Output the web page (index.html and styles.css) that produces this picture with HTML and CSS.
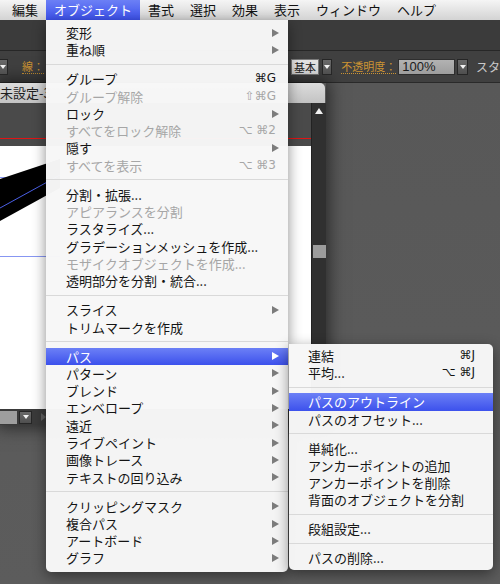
FILE: index.html
```html
<!DOCTYPE html>
<html lang="ja">
<head>
    <meta charset="UTF-8">
    <title>オブジェクト メニュー</title>
    <link rel="stylesheet" href="styles.css">
</head>
<body>
    <div class="screen">
        <div class="menubar">
            <span class="mb-item">編集</span>
            <span class="mb-item is-open">オブジェクト</span>
            <span class="mb-item">書式</span>
            <span class="mb-item">選択</span>
            <span class="mb-item">効果</span>
            <span class="mb-item">表示</span>
            <span class="mb-item">ウィンドウ</span>
            <span class="mb-item">ヘルプ</span>
        </div>

        <div class="apptool"></div>

        <div class="ctlbar">
            <div class="ctl-left">
                <span class="dd-btn dd-btn--cut"></span>
                <span class="ctl-label ctl-label--stroke">線：</span>
            </div>
            <span class="field field--light">基本</span>
            <span class="dd-btn dd-btn--after-light"></span>
            <span class="ctl-label ctl-label--opacity">不透明度：</span>
            <span class="field field--gray">100%</span>
            <span class="dd-btn dd-btn--after-gray"></span>
            <span class="ctl-text">スタ</span>
        </div>

        <div class="pasteboard">
            <div class="docwin">
                <div class="doc-tab">未設定-3</div>
                <div class="doc-body">
                    <div class="doc-view">
                        <div class="guide-red"></div>
                        <div class="artboard">
                            <svg width="311" height="263" viewBox="0 0 311 263">
                                <line x1="0" y1="31.5" x2="60" y2="31.5" stroke="#8796f2" stroke-width="1"/>
                                <line x1="0" y1="110.5" x2="60" y2="110.5" stroke="#8796f2" stroke-width="1"/>
                                <polygon points="0,33 60,13 60,42 0,75" fill="#000"/>
                                <line x1="0" y1="62" x2="60" y2="29" stroke="#4a5fe6" stroke-width="1"/>
                            </svg>
                        </div>
                    </div>
                    <div class="vscroll">
                        <span class="vs-up"></span>
                        <span class="vs-thumb"></span>
                    </div>
                </div>
                <div class="doc-status">
                    <span class="st-field"></span>
                    <span class="dd-btn dd-btn--status"></span>
                    <span class="st-next"></span>
                </div>
            </div>
        </div>

        <!-- オブジェクト menu -->
        <div class="menu menu--main">
            <div class="row">変形<span class="arrow"></span></div>
            <div class="row">重ね順<span class="arrow"></span></div>
            <div class="sep"></div>
            <div class="row">グループ<span class="key">⌘G</span></div>
            <div class="row is-off">グループ解除<span class="key">⇧⌘G</span></div>
            <div class="row">ロック<span class="arrow"></span></div>
            <div class="row is-off">すべてをロック解除<span class="key">⌥ ⌘2</span></div>
            <div class="row">隠す<span class="arrow"></span></div>
            <div class="row is-off">すべてを表示<span class="key">⌥ ⌘3</span></div>
            <div class="sep"></div>
            <div class="row">分割・拡張...</div>
            <div class="row is-off">アピアランスを分割</div>
            <div class="row">ラスタライズ...</div>
            <div class="row">グラデーションメッシュを作成...</div>
            <div class="row is-off">モザイクオブジェクトを作成...</div>
            <div class="row">透明部分を分割・統合...</div>
            <div class="sep"></div>
            <div class="row">スライス<span class="arrow"></span></div>
            <div class="row">トリムマークを作成</div>
            <div class="sep"></div>
            <div class="row is-hot">パス<span class="arrow"></span></div>
            <div class="row">パターン<span class="arrow"></span></div>
            <div class="row">ブレンド<span class="arrow"></span></div>
            <div class="row">エンベロープ<span class="arrow"></span></div>
            <div class="row">遠近<span class="arrow"></span></div>
            <div class="row">ライブペイント<span class="arrow"></span></div>
            <div class="row">画像トレース<span class="arrow"></span></div>
            <div class="row">テキストの回り込み<span class="arrow"></span></div>
            <div class="sep"></div>
            <div class="row">クリッピングマスク<span class="arrow"></span></div>
            <div class="row">複合パス<span class="arrow"></span></div>
            <div class="row">アートボード<span class="arrow"></span></div>
            <div class="row">グラフ<span class="arrow"></span></div>
        </div>

        <!-- パス submenu -->
        <div class="menu menu--sub">
            <div class="row">連結<span class="key">⌘J</span></div>
            <div class="row">平均...<span class="key">⌥ ⌘J</span></div>
            <div class="sep"></div>
            <div class="row is-hot">パスのアウトライン</div>
            <div class="row">パスのオフセット...</div>
            <div class="sep"></div>
            <div class="row">単純化...</div>
            <div class="row">アンカーポイントの追加</div>
            <div class="row">アンカーポイントを削除</div>
            <div class="row">背面のオブジェクトを分割</div>
            <div class="sep"></div>
            <div class="row">段組設定...</div>
            <div class="sep"></div>
            <div class="row">パスの削除...</div>
        </div>
    </div>
</body>
</html>
```

FILE: styles.css
```css
body {
    margin: 0;
    background: #5a5a5a;
    font-family: "Noto Sans CJK JP", "Noto Sans", sans-serif;
}
.screen {
    position: relative;
    width: 500px;
    height: 584px;
    overflow: hidden;
    display: flex;
    flex-direction: column;
}

/* menu bar */
.menubar {
    height: 20px;
    flex: 0 0 20px;
    display: flex;
    padding-left: 4px;
    background: linear-gradient(#f5f5f5, #d3d3d3);
    font-size: 13px;
    line-height: 20px;
    color: #111;
}
.mb-item {
    padding: 0 8px;
    white-space: nowrap;
}
.mb-item.is-open {
    color: #fff;
    background: linear-gradient(#6c80f6, #3c51ec);
}

/* application bars */
.apptool {
    flex: 0 0 30px;
    background: #3b3b3b;
    border-bottom: 1px solid #272727;
}
.ctlbar {
    flex: 0 0 31px;
    display: flex;
    align-items: center;
    background: #404040;
    border-bottom: 1px solid #2a2a2a;
    white-space: nowrap;
}
.ctl-left {
    flex: 0 0 291px;
    display: flex;
    align-items: center;
}
.ctl-label {
    font-size: 11px;
    line-height: 13px;
    color: #cc9433;
    border-bottom: 1px dotted #cc9433;
}
.ctl-label--stroke { margin-left: 14px; }
.ctl-label--opacity { margin-left: 9px; }
.ctl-text {
    margin-left: 8px;
    font-size: 12px;
    color: #c8c8c8;
}
.field {
    box-sizing: border-box;
    height: 16px;
    display: flex;
    align-items: center;
}
.field--light {
    width: 29px;
    padding-left: 2px;
    background: #e3e3e3;
    border: 1px solid #7a7a7a;
    font-size: 11px;
    color: #222;
}
.field--gray {
    width: 60px;
    margin-left: 2px;
    padding-left: 3px;
    background: linear-gradient(#b2b2b2, #9d9d9d);
    border: 1px solid #2e2e2e;
    font-family: "Liberation Sans", Arial, sans-serif;
    font-size: 13px;
    color: #1c1c1c;
}
.dd-btn {
    position: relative;
    box-sizing: border-box;
    width: 11px;
    height: 16px;
    background: linear-gradient(#6a6a6a, #4f4f4f);
    border: 1px solid #262626;
}
.dd-btn::after {
    content: "";
    position: absolute;
    left: 50%;
    top: 50%;
    margin: -2px 0 0 -3px;
    border-top: 4px solid #f2f2f2;
    border-left: 3px solid transparent;
    border-right: 3px solid transparent;
}
.dd-btn--cut { margin-left: -3px; }
.dd-btn--after-light { margin-left: 3px; }
.dd-btn--after-gray { margin-left: 2px; }
.dd-btn--status {
    width: 13px;
    height: 13px;
    margin-left: 2px;
}

/* document window */
.pasteboard {
    flex: 1;
    background: linear-gradient(#585858, #5c5c5c);
}
.docwin {
    width: 326px;
    display: flex;
    flex-direction: column;
    box-shadow: 0 0 16px 3px rgba(0, 0, 0, 0.55);
}
.doc-tab {
    width: 325px;
    height: 20px;
    box-sizing: border-box;
    background: linear-gradient(#dcdcdc, #c3c3c3);
    border-radius: 0 5px 0 0;
    font-size: 13px;
    line-height: 19px;
    color: #1e1e1e;
    white-space: nowrap;
}
.doc-body {
    display: flex;
    height: 306px;
}
.doc-view {
    width: 311px;
    background: #4a4a4a;
    display: flex;
    flex-direction: column;
}
.guide-red {
    height: 1px;
    margin-top: 35px;
    background: #e01414;
}
.artboard {
    flex: 1;
    margin-top: 7px;
    background: #fff;
}
.artboard svg { display: block; }
.vscroll {
    width: 15px;
    box-sizing: border-box;
    background: #303030;
    border-left: 1px solid #222;
    display: flex;
    flex-direction: column;
    align-items: center;
}
.vs-up {
    margin-top: 5px;
    border-bottom: 6px solid #f0f0f0;
    border-left: 4px solid transparent;
    border-right: 4px solid transparent;
}
.vs-thumb {
    width: 13px;
    height: 13px;
    margin-top: 131px;
    background: #9c9c9c;
}
.doc-status {
    height: 16px;
    display: flex;
    align-items: center;
    background: #3a3a3a;
}
.st-field {
    width: 17px;
    height: 13px;
    background: #9e9e9e;
}
.st-next {
    margin-left: 9px;
    border-left: 5px solid #606060;
    border-top: 4px solid transparent;
    border-bottom: 4px solid transparent;
}

/* pull-down menus */
.menu {
    position: absolute;
    box-sizing: border-box;
    background: rgba(247, 247, 247, 0.98);
    box-shadow: 0 4px 14px rgba(0, 0, 0, 0.45);
    font-size: 13px;
    color: #141414;
}
.menu--main {
    left: 46px;
    top: 20px;
    width: 242px;
    padding: 4px 0 5px;
    border-radius: 0 0 5px 5px;
}
.menu--sub {
    left: 289px;
    top: 344px;
    width: 204px;
    padding: 3px 0;
    border-radius: 0 5px 5px 5px;
}
.row {
    height: 17.3px;
    line-height: 17.3px;
    display: flex;
    align-items: center;
    padding-left: 20px;
    white-space: nowrap;
}
.menu--sub .row { padding-left: 19px; }
.row.is-off { color: #a6a6a6; }
.row.is-hot {
    color: #fff;
    background: linear-gradient(#6c80f6, #3c51ec);
}
.sep {
    height: 1px;
    margin: 5.35px 0;
    background: #d9d9d9;
}
.key {
    margin-left: auto;
    margin-right: 12px;
    font-family: "DejaVu Sans", sans-serif;
    font-size: 12px;
}
.menu--sub .key { margin-right: 18px; }
.arrow {
    margin-left: auto;
    margin-right: 9px;
    border-left: 7px solid #7c7c7c;
    border-top: 4px solid transparent;
    border-bottom: 4px solid transparent;
}
.row.is-hot .arrow { border-left-color: #fff; }
```
